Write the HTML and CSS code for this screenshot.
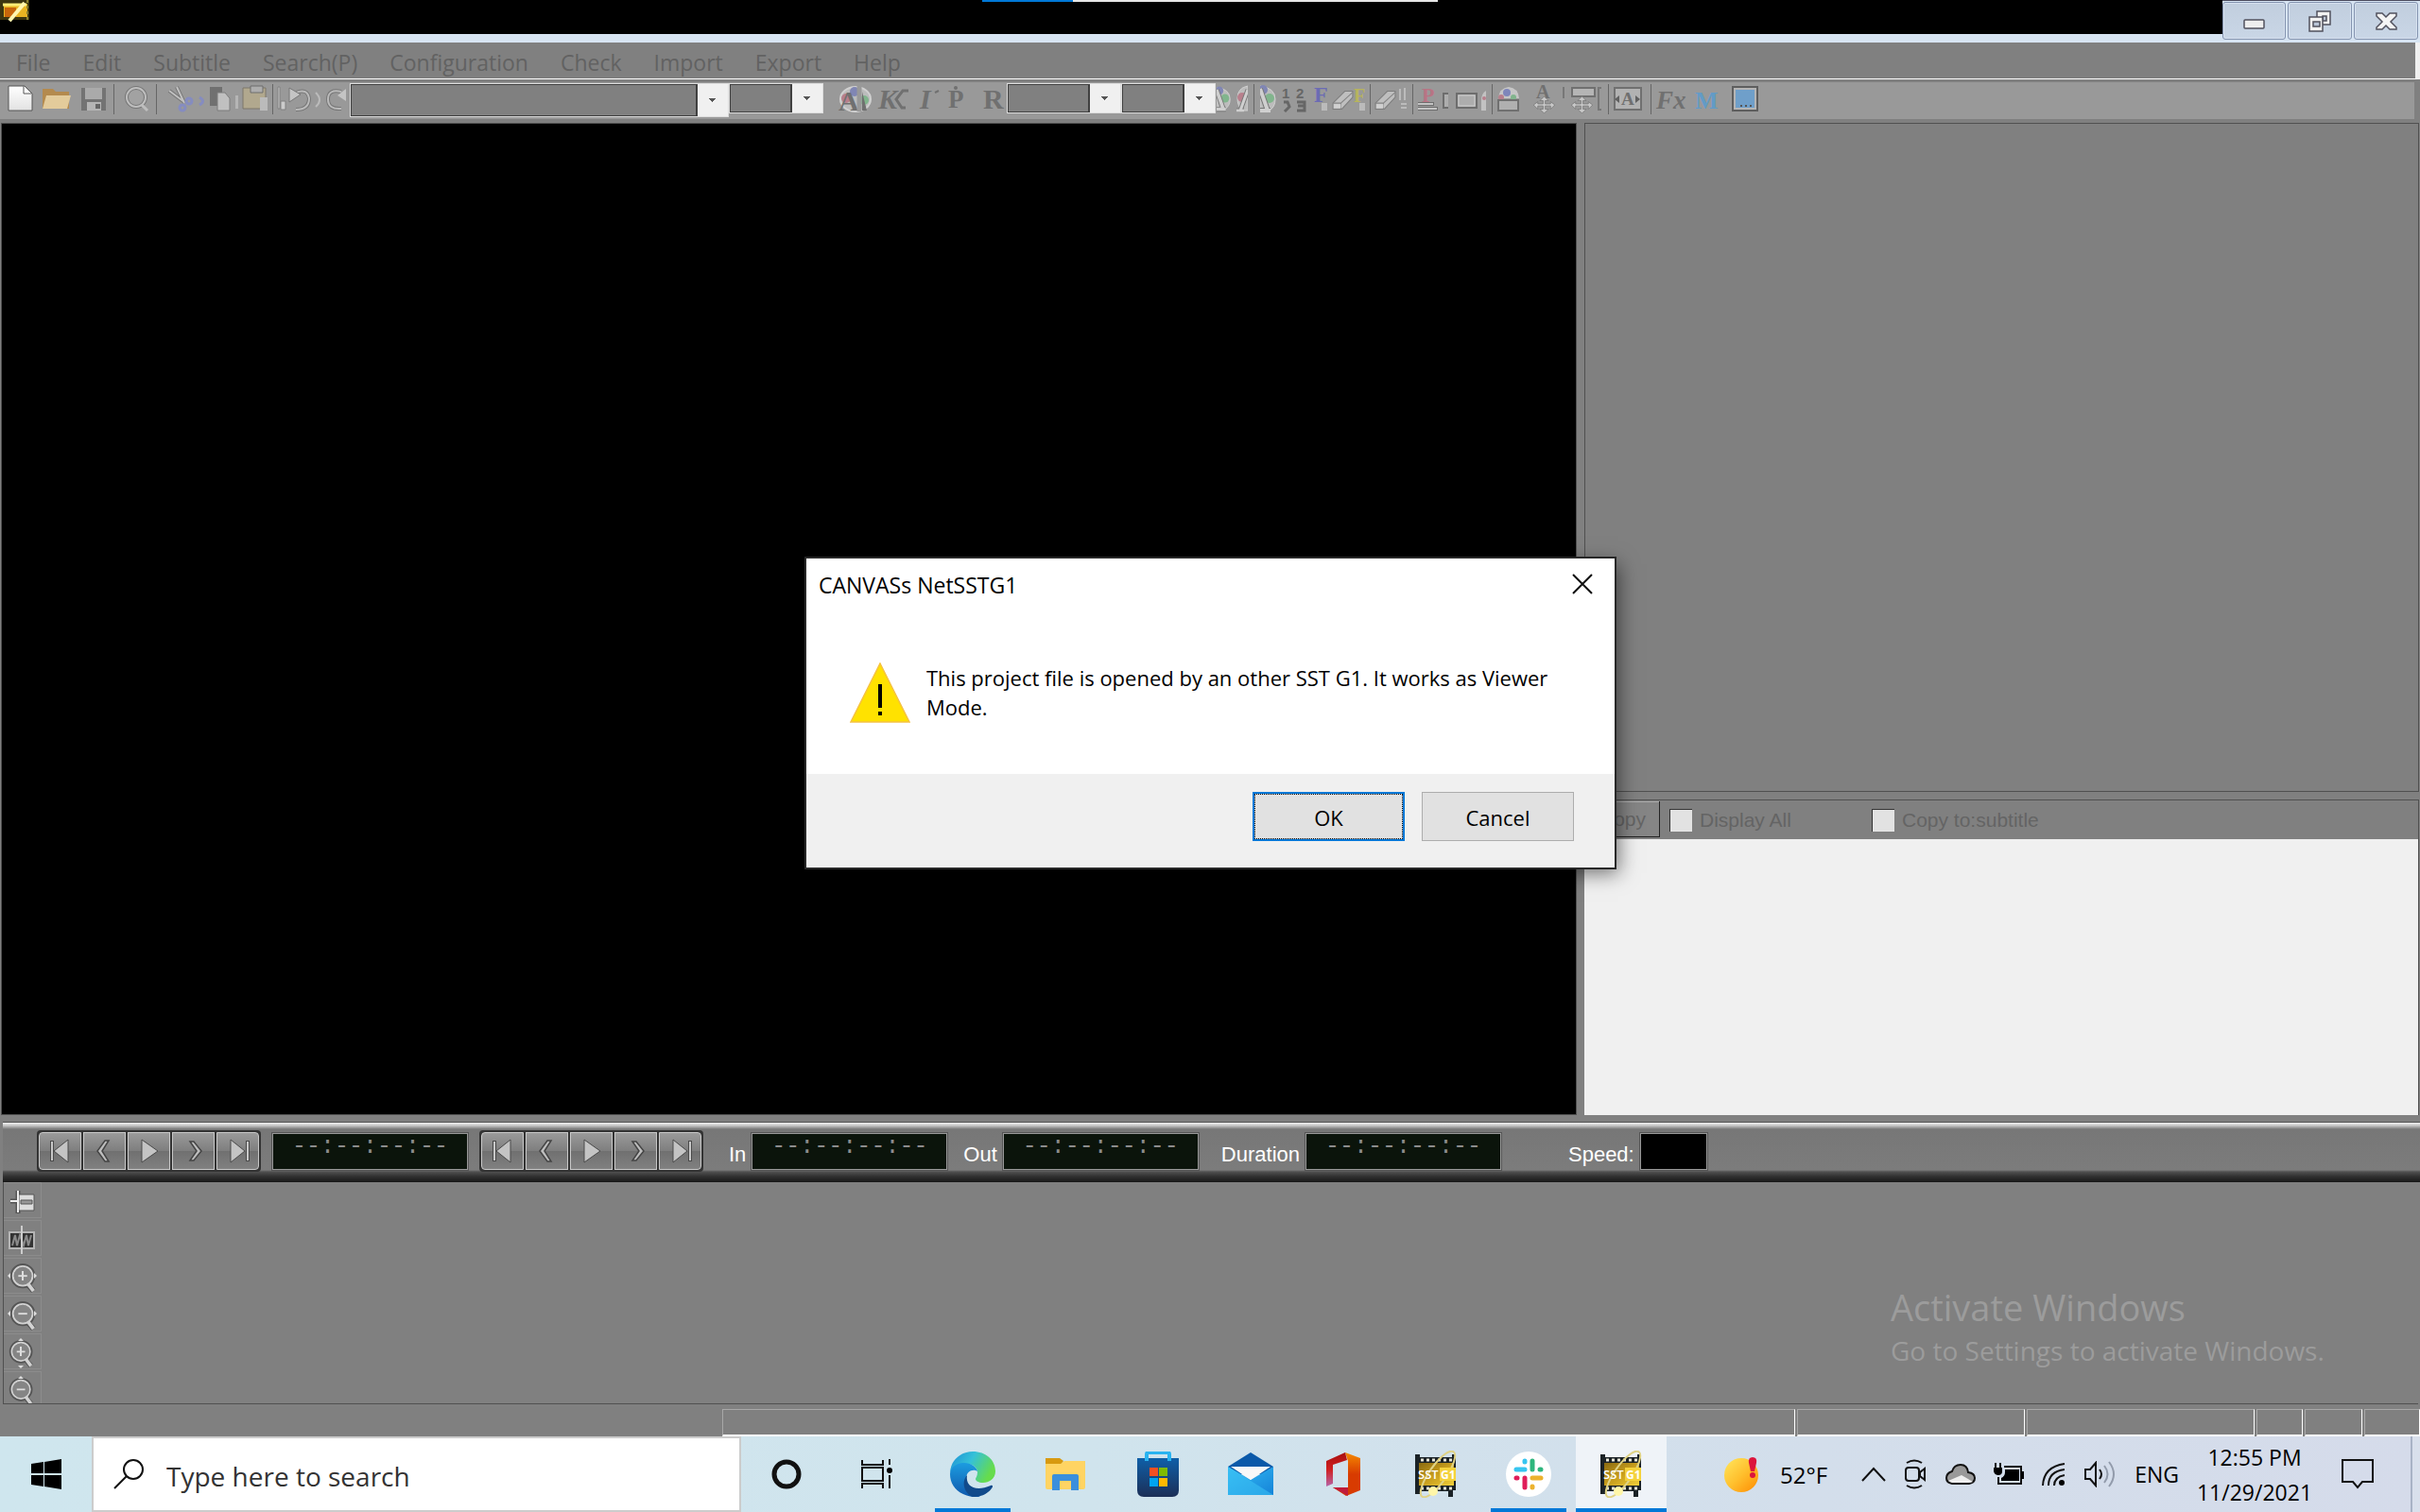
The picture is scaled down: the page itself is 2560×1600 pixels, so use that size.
FILE: index.html
```html
<!DOCTYPE html>
<html lang="en">
<head>
<meta charset="utf-8">
<title>CANVASs NetSSTG1</title>
<link rel="stylesheet" href="styles.css">
</head>
<body>
<svg class="defs" width="0" height="0" aria-hidden="true">
  <defs>
    <linearGradient id="page" x1="0" y1="0" x2="0" y2="1"><stop offset="0" stop-color="#fff"/><stop offset="1" stop-color="#e2e2e2"/></linearGradient>
    <linearGradient id="edgeTop" x1="0" y1="0" x2="1" y2="0.4"><stop offset="0" stop-color="#1b8ed6"/><stop offset=".5" stop-color="#35c1d8"/><stop offset="1" stop-color="#66dc4c"/></linearGradient>
    <linearGradient id="edgeSwirl" x1="0" y1="0" x2="0" y2="1"><stop offset="0" stop-color="#1c9ce0"/><stop offset="1" stop-color="#0f58ac"/></linearGradient>
    <linearGradient id="store" x1="0" y1="0" x2="0" y2="1"><stop offset="0" stop-color="#0f5fa8"/><stop offset="1" stop-color="#1c2f57"/></linearGradient>
    <linearGradient id="office" x1="0" y1="0" x2="0" y2="1"><stop offset="0" stop-color="#f58a00"/><stop offset=".5" stop-color="#d83b01"/><stop offset="1" stop-color="#d83b01"/></linearGradient>
    <linearGradient id="officeSide" x1="0" y1="0" x2="0" y2="1"><stop offset="0" stop-color="#a80f0f"/><stop offset=".5" stop-color="#d02020"/><stop offset="1" stop-color="#b665a8"/></linearGradient>
    <linearGradient id="mail" x1="0" y1="0" x2="1" y2="1"><stop offset="0" stop-color="#35bdf5"/><stop offset="1" stop-color="#1583d8"/></linearGradient>
    <linearGradient id="gold" x1="0" y1="0" x2="1" y2="1"><stop offset="0" stop-color="#8a6a10"/><stop offset=".5" stop-color="#c79d1d"/><stop offset="1" stop-color="#f0cf3a"/></linearGradient>
    <linearGradient id="sun" x1="0" y1="0" x2="1" y2="1"><stop offset="0" stop-color="#ffe75e"/><stop offset=".5" stop-color="#ffc02e"/><stop offset="1" stop-color="#ff8a00"/></linearGradient>
    <symbol id="first" viewBox="0 0 26 26"><path d="M4 2v22" stroke="#4a4a4a" stroke-width="4"/><path d="M4 3v20" stroke="#c8c8c8" stroke-width="2"/><path d="M21 1v24L6 13z" fill="#c4c4c4" stroke="#4a4a4a"/></symbol>
    <symbol id="prev" viewBox="0 0 26 26"><path d="M17 2h-4L5 13l8 11h4l-7-11z" fill="#bdbdbd" stroke="#444" stroke-width="1.5"/></symbol>
    <symbol id="play" viewBox="0 0 26 26"><path d="M5 1v24L22 13z" fill="#c4c4c4" stroke="#4a4a4a"/></symbol>
    <symbol id="next" viewBox="0 0 26 26"><path d="M9 3h4l8 10-8 10H9l7-10z" fill="#bdbdbd" stroke="#444" stroke-width="1.5"/></symbol>
    <symbol id="last" viewBox="0 0 26 26"><path d="M5 1v24l15-12z" fill="#c4c4c4" stroke="#4a4a4a"/><path d="M23 2v22" stroke="#4a4a4a" stroke-width="4"/><path d="M23 3v20" stroke="#c8c8c8" stroke-width="2"/></symbol>
    <symbol id="palette" viewBox="0 0 36 28"><ellipse cx="18" cy="14" rx="16" ry="13" fill="#bcbcbc" stroke="#d0d0d0" stroke-width="2"/><circle cx="8" cy="13" r="5" fill="#b87f8c"/><circle cx="17" cy="6" r="5" fill="#8086b4"/><circle cx="27" cy="15" r="5" fill="#81b58d"/></symbol>
    <symbol id="right-half" viewBox="0 0 18 30"><path d="M0 2q16 2 16 14 0 8-6 12H0z" fill="#bcbcbc" stroke="#d0d0d0"/><circle cx="3" cy="6" r="5" fill="#8086b4"/><circle cx="10" cy="15" r="5" fill="#81b58d"/><path d="M0 5l8 23M0 28h11" stroke="#777" stroke-width="6"/><path d="M0 5l8 23M0 28h11" stroke="#cfcfcf" stroke-width="4"/></symbol>
    <symbol id="left-half" viewBox="0 0 12 30"><path d="M12 2Q1 4 1 15q0 8 5 13h6z" fill="#bcbcbc" stroke="#d0d0d0"/><circle cx="6" cy="14" r="5" fill="#b87f8c"/><path d="M12 6L4 28M0 28h8" stroke="#777" stroke-width="5"/><path d="M12 6L4 28M0 28h8" stroke="#cfcfcf" stroke-width="3"/></symbol>
    <symbol id="move" viewBox="0 0 20 16"><path d="M10 0l4 4h-3v3h5V5l4 3-4 4V9h-5v3h3l-4 4-4-4h3V9H4v3L0 8l4-3v2h5V4H6z" fill="#c8c8c8" stroke="#777" stroke-width=".7"/></symbol>
    <symbol id="eraser" viewBox="0 0 22 22"><path d="M1 14L13 2h8v6L10 20H1z" fill="#bfbfbf" stroke="#7d7d7d"/><path d="M1 14h8L21 3M9 14v6" fill="none" stroke="#858585"/><path d="M2 15h7v4H2z" fill="#d0d0d0"/></symbol>
    <symbol id="lens" viewBox="0 0 34 34"><path d="M21 23l7 8" stroke="#555" stroke-width="6"/><circle cx="16" cy="14" r="12" fill="#858585" stroke="#555" stroke-width="4"/><circle cx="16" cy="14" r="11" fill="none" stroke="#d2d2d2" stroke-width="2"/><path d="M22 23l6 8" stroke="#d2d2d2" stroke-width="4"/><path d="M11 14h10" stroke="#ddd" stroke-width="2"/></symbol>
    <symbol id="sst" viewBox="0 0 50 50">
      <path d="M3 4h5v3h34V4h4v38h-3v7h-5v-6H8v3H3z" fill="#1b2226"/>
      <path d="M7 13h37v24H7z" fill="url(#gold)"/>
      <path d="M9 10h34M9 40h34" stroke="#e8e6d8" stroke-width="3" stroke-dasharray="3 3"/>
      <ellipse cx="27" cy="25" rx="9" ry="29" transform="rotate(35 27 25)" fill="none" stroke="#e0d385" stroke-width="2"/>
      <path d="M29 18h17v14H29z" fill="#f4d23c"/>
      <circle cx="22" cy="43" r="5" fill="#fff6a8"/>
      <text x="6" y="30" font-size="13" font-family="Open Sans, sans-serif" font-weight="600" fill="#fff">SST</text>
      <text x="30" y="30" font-size="12" font-family="Open Sans, sans-serif" font-weight="700" fill="#fff">G1</text>
    </symbol>
  </defs>
</svg>

<div class="app">
  <header class="titlebar">
    <svg class="app-icon" width="32" height="36" viewBox="0 0 32 36"><path d="M0 0h31v21H0z" fill="#3b3510"/><path d="M4 4h25v14H4z" fill="#e8b422"/><path d="M5 8h12v10H5z" fill="#c7660b"/><path d="M3 5h25" stroke="#ffef77" stroke-width="3"/><path d="M26 3L10 22" stroke="#fff6b0" stroke-width="4"/><path d="M29 0v24" stroke="#8a8030" stroke-width="2" stroke-dasharray="3 3"/></svg>
    <div class="load"><span class="load-done"></span><span class="load-rest"></span></div>
    <div class="window-buttons">
      <button aria-label="Minimize"><svg width="30" height="24" viewBox="0 0 30 24"><rect x="4" y="11" width="21" height="9" rx="1" fill="#eee" stroke="#52525e" stroke-width="1.5"/></svg></button>
      <button aria-label="Restore"><svg width="30" height="24" viewBox="0 0 30 24"><path d="M12 2h14v14H12z" fill="#f2f2f2" stroke="#52525e" stroke-width="1.5"/><path d="M18 7h4v5h-4z" fill="#b8c4d6" stroke="#52525e" stroke-width="1.5"/><path d="M4 8h14v15H4z" fill="#f2f2f2" stroke="#52525e" stroke-width="1.5"/><path d="M8 13h7v5H8z" fill="#b8c4d6" stroke="#52525e" stroke-width="1.5"/></svg></button>
      <button aria-label="Close window"><svg width="30" height="24" viewBox="0 0 30 24"><path d="M5 4h6l4 4 4-4h7v3l-6 6 6 6v2h-7l-4-4-4 4H5v-2l6-6-6-6z" fill="#f4f4f4" stroke="#52525e" stroke-width="1.5"/></svg></button>
    </div>
  </header>

  <nav class="menubar">
    <button>File</button><button>Edit</button><button>Subtitle</button><button>Search(P)</button><button>Configuration</button><button>Check</button><button>Import</button><button>Export</button><button>Help</button>
  </nav>

  <div class="toolbar">
    <button aria-label="New"><svg width="39" height="39" viewBox="0 0 39 39"><path d="M9 4h17l8 8v18H9z" fill="url(#page)" stroke="#555"/><path d="M25 4v8h8" fill="#fff" stroke="#555"/></svg></button>
    <button aria-label="Open"><svg width="42" height="39" viewBox="39 0 42 39"><path d="M45 7h11l3 3h14v18H45z" fill="#b48a4e"/><path d="M49 14h26l-4 14H45z" fill="#e3cb9b"/></svg></button>
    <button aria-label="Save"><svg width="39" height="39" viewBox="81 0 39 39"><path d="M86 6h26v24H86z" fill="#737373"/><path d="M90 6h18v12H90z" fill="#aaa"/><path d="M92 21h15v9H92z" fill="#b5b5b5"/><path d="M101 23h5v5h-5z" fill="#666"/></svg></button>
    <span class="sep"></span>
    <button aria-label="Find"><svg width="44" height="39" viewBox="121 0 44 39"><ellipse cx="144" cy="16" rx="10" ry="10" fill="#a2a2a2" stroke="#777" stroke-width="4"/><circle cx="144" cy="16" r="10" fill="none" stroke="#bebebe" stroke-width="2"/><path d="M150 24l6 6" stroke="#bebebe" stroke-width="3"/></svg></button>
    <span class="sep"></span>
    <button aria-label="Cut"><svg width="54" height="39" viewBox="166 0 54 39"><path d="M179 9l16 12M187 5l8 17" stroke="#747474" stroke-width="4"/><path d="M179 9l16 12M187 5l8 17" stroke="#c0c0c0" stroke-width="2"/><circle cx="193" cy="27" r="3" fill="none" stroke="#858cc0" stroke-width="3"/><circle cx="200" cy="20" r="3" fill="none" stroke="#858cc0" stroke-width="3"/><path d="M211 16q7 4 0 8" fill="none" stroke="#858cc0" stroke-width="3"/></svg></button>
    <button aria-label="Copy"><svg width="35" height="39" viewBox="220 0 35 39"><path d="M222 5h13v20h-13z" fill="#707070"/><path d="M230 11h8l5 6v13h-13z" fill="#c0c0c0" stroke="#7c7c7c"/><path d="M249 14h3v14h-3z" fill="#b5b5b5"/></svg></button>
    <button aria-label="Paste"><svg width="33" height="39" viewBox="255 0 33 39"><path d="M257 6h24v22h-24z" fill="#b1a88e" stroke="#7d776a"/><path d="M265 4h13v7h-13z" fill="#adadad" stroke="#6d6d6d"/><path d="M275 16h8v14h-8z" fill="#bbb"/></svg></button>
    <span class="sep"></span>
    <button aria-label="Undo"><svg width="43" height="39" viewBox="289 0 43 39"><path d="M294 5h2v23h-2zM297 20h5v9h-5z" fill="#ccc" stroke="#808080"/><path d="M313 11q12-5 14 6q0 12-14 12" fill="none" stroke="#777" stroke-width="4"/><path d="M313 11q12-5 14 6q0 12-14 12" fill="none" stroke="#bbb" stroke-width="2"/><path d="M306 6l12 7-12 8z" fill="#c4c4c4" stroke="#777"/></svg></button>
    <button aria-label="Redo"><svg width="38" height="39" viewBox="332 0 38 39"><path d="M334 11q8 8 0 15" fill="none" stroke="#bbb" stroke-width="2"/><path d="M361 10q-14-3-14 8q0 11 14 10" fill="none" stroke="#777" stroke-width="4"/><path d="M361 10q-14-3-14 8q0 11 14 10" fill="none" stroke="#bbb" stroke-width="2"/><path d="M366 7v13l-9-6z" fill="#c4c4c4"/></svg></button>
    <select class="combo wide" aria-label="Style"><option></option></select>
    <select class="combo size" aria-label="Size"><option></option></select>
    <button aria-label="Text colour"><svg width="56" height="39" viewBox="871 0 56 39"><use href="#palette" x="887" y="4" width="36" height="28"/><text class="glyph" x="887" y="30" font-size="30">A</text><path d="M909 4v27" stroke="#999" stroke-width="5"/><path d="M912 10v20h5z" fill="#707070"/></svg></button>
    <button aria-label="Kerning"><svg width="40" height="39" viewBox="927 0 40 39"><text class="glyph" x="929" y="28" font-size="30" font-style="italic">K</text><path d="M961 9h-6l-7 9 6 9h4" fill="none" stroke="#707070" stroke-width="3"/></svg></button>
    <button aria-label="Italic"><svg width="32" height="39" viewBox="967 0 32 39"><text class="glyph" x="973" y="28" font-size="30" font-style="italic">I</text><path d="M989 11l4-2" stroke="#707070" stroke-width="2"/></svg></button>
    <button aria-label="Emphasis dot"><svg width="34" height="39" viewBox="999 0 34 39"><text class="glyph" x="1003" y="27" font-size="27">P</text><circle cx="1011" cy="6" r="2" fill="#707070"/></svg></button>
    <button aria-label="Ruby"><svg width="32" height="39" viewBox="1033 0 32 39"><text class="glyph" x="1040" y="28" font-size="30">R</text></svg></button>
    <select class="combo font" aria-label="Ruby font"><option></option></select>
    <select class="combo size" aria-label="Ruby size"><option></option></select>
    <button aria-label="Fill colour"><svg width="18" height="39" viewBox="1286 0 18 39"><use href="#right-half" x="1287" y="2" width="16" height="30"/></svg></button>
    <button aria-label="Edge colour"><svg width="22" height="39" viewBox="1304 0 22 39"><use href="#left-half" x="1308" y="2" width="12" height="30"/></svg></button>
    <span class="sep"></span>
    <button aria-label="Shadow colour"><svg width="27" height="39" viewBox="1327 0 27 39"><use href="#right-half" x="1333" y="2" width="18" height="30"/></svg></button>
    <button aria-label="Renumber"><svg width="32" height="39" viewBox="1354 0 32 39"><g class="digits" font-size="15"><text x="1356" y="17">1</text><text x="1371" y="17">2</text></g><path d="M1358 21h4l2 5-5 5M1372 21h8v9h-8M1373 25h7" fill="none" stroke="#666" stroke-width="3"/></svg></button>
    <button aria-label="Font tag"><svg width="21" height="39" viewBox="1386 0 21 39"><path d="M1398 22h6v8h-6z" fill="#bbb"/><text class="glyph blue" x="1390" y="21" font-size="24">F</text></svg></button>
    <button aria-label="Clear font"><svg width="42" height="39" viewBox="1407 0 42 39"><use href="#eraser" x="1409" y="7" width="23" height="24"/><path d="M1438 22h6v8h-6z" fill="#bbb"/><text class="glyph yellow" x="1432" y="21" font-size="20">F</text></svg></button>
    <span class="sep"></span>
    <button aria-label="Clear"><svg width="44" height="39" viewBox="1450 0 44 39"><use href="#eraser" x="1454" y="7" width="23" height="24"/><path d="M1481 7v12M1486 6v13M1482 23h6M1482 27h6" stroke="#bbb" stroke-width="2"/></svg></button>
    <span class="sep"></span>
    <button aria-label="Position"><svg width="29" height="39" viewBox="1495 0 29 39"><text class="glyph rose" x="1504" y="21" font-size="22">P</text><path d="M1500 23h17M1500 28h21" stroke="#6e6e6e" stroke-width="4"/><path d="M1500 23h16M1500 28h20" stroke="#c4c4c4" stroke-width="2"/></svg></button>
    <button aria-label="Box"><svg width="54" height="39" viewBox="1524 0 54 39"><path d="M1532 12h-5v15h5M1541 12h21v15h-21z" fill="#adadad" stroke="#6d6d6d" stroke-width="2"/><path d="M1543 14h17v11h-17z" fill="none" stroke="#ccc"/><path d="M1572 9q-5 3-5 10v11h5z" fill="#c2c2c2"/><circle cx="1570" cy="17" r="2" fill="#b87f8c"/></svg></button>
    <span class="sep"></span>
    <button aria-label="Box colour"><svg width="41" height="39" viewBox="1579 0 41 39"><path d="M1585 17q1-11 11-12 10 1 11 12z" fill="#c6c6c6"/><circle cx="1594" cy="11" r="4" fill="#7f86ba"/><circle cx="1588" cy="16" r="3" fill="#b87f8c"/><circle cx="1601" cy="16" r="3" fill="#81b58d"/><path d="M1585 19h21v11h-21z" fill="#b0b0b0" stroke="#707070" stroke-width="2"/></svg></button>
    <button aria-label="Move text"><svg width="37" height="39" viewBox="1620 0 37 39"><text class="glyph" x="1625" y="17" font-size="20">A</text><use href="#move" x="1622" y="15" width="23" height="18"/><path d="M1654 5v12" stroke="#777" stroke-width="2"/></svg></button>
    <button aria-label="Move box"><svg width="44" height="39" viewBox="1657 0 44 39"><path d="M1663 6h24v9h-24z" fill="#b5b5b5" stroke="#707070" stroke-width="2"/><use href="#move" x="1662" y="15" width="23" height="18"/><path d="M1694 6h-3v23h3" fill="none" stroke="#777" stroke-width="2"/></svg></button>
    <span class="sep"></span>
    <button aria-label="Spacing"><svg width="44" height="39" viewBox="1702 0 44 39"><path d="M1708 6h28v23h-28z" fill="#b2b2b2" stroke="#707070" stroke-width="2"/><text class="glyph" x="1715" y="24" font-size="19">A</text><path d="M1708 18l5-4v8zM1735 18l-5-4v8z" fill="#606060"/></svg></button>
    <span class="sep"></span>
    <button aria-label="Effects"><svg width="40" height="39" viewBox="1747 0 40 39"><text class="glyph" x="1752" y="28" font-size="27" font-style="italic">Fx</text></svg></button>
    <button aria-label="Marker"><svg width="38" height="39" viewBox="1787 0 38 39"><text class="glyph sky" x="1793" y="28" font-size="26">M</text></svg></button>
    <button aria-label="Preview"><svg width="40" height="39" viewBox="1825 0 40 39"><path d="M1833 5h26v25h-26z" fill="#b5b5b5" stroke="#5e5e5e" stroke-width="2"/><path d="M1836 8h20v19h-20z" fill="#6f9fca"/><path d="M1841 25h13" stroke="#555" stroke-width="2" stroke-dasharray="2 3"/></svg></button>
  </div>

  <main class="workspace">
    <section class="video" aria-label="Video"></section>
    <aside class="side">
      <section class="list" aria-label="Subtitles"></section>
      <div class="copybar">
        <button class="copy">Copy</button>
        <label><input type="checkbox">Display All</label>
        <label><input type="checkbox">Copy to:subtitle</label>
      </div>
      <textarea class="memo" aria-label="Memo"></textarea>
    </aside>
  </main>

  <section class="transport">
    <div class="keys">
      <button aria-label="First"><svg width="26" height="26"><use href="#first"/></svg></button><button aria-label="Back"><svg width="26" height="26"><use href="#prev"/></svg></button><button aria-label="Play"><svg width="26" height="26"><use href="#play"/></svg></button><button aria-label="Forward"><svg width="26" height="26"><use href="#next"/></svg></button><button aria-label="Last"><svg width="26" height="26"><use href="#last"/></svg></button>
    </div>
    <output class="code">--:--:--:--</output>
    <div class="keys">
      <button aria-label="First cue"><svg width="26" height="26"><use href="#first"/></svg></button><button aria-label="Previous cue"><svg width="26" height="26"><use href="#prev"/></svg></button><button aria-label="Play cue"><svg width="26" height="26"><use href="#play"/></svg></button><button aria-label="Next cue"><svg width="26" height="26"><use href="#next"/></svg></button><button aria-label="Last cue"><svg width="26" height="26"><use href="#last"/></svg></button>
    </div>
    <div class="field in"><span>In</span><output class="code">--:--:--:--</output></div>
    <div class="field out"><span>Out</span><output class="code">--:--:--:--</output></div>
    <div class="field duration"><span>Duration</span><output class="code">--:--:--:--</output></div>
    <div class="field speed"><span>Speed:</span><output class="code"></output></div>
  </section>

  <section class="timeline">
    <div class="timeline-tools">
      <button aria-label="Timeline mode"><svg width="34" height="34" viewBox="0 0 34 34"><path d="M15 4v24M7 15h8" stroke="#555" stroke-width="5"/><path d="M16 8h16v17H16z" fill="#ddd" stroke="#555"/><path d="M18 14h12v4H18z" fill="#999" stroke="#555"/><path d="M15 4v23M7 15h8" stroke="#eee" stroke-width="2"/></svg></button>
      <button aria-label="Waveform"><svg width="34" height="34" viewBox="0 0 34 34"><path d="M6 8h26v17H6z" fill="#333" stroke="#b5b5b5" stroke-width="2"/><path d="M9 22l3-11 2 11 3-11 4 11 3-11 2 11 3-11" fill="none" stroke="#8a8a8a" stroke-width="2"/><path d="M19 1v30" stroke="#ccc" stroke-width="2"/></svg></button>
      <button aria-label="Widen"><svg width="36" height="34" viewBox="0 0 36 34"><use href="#lens" x="5" y="1" width="32" height="32"/><path d="M20 9v10" stroke="#ddd" stroke-width="2"/><path d="M7 11l-3 3 3 3M32 11l3 3-3 3" fill="#ddd"/></svg></button>
      <button aria-label="Narrow"><svg width="36" height="34" viewBox="0 0 36 34"><use href="#lens" x="5" y="1" width="32" height="32"/><path d="M7 11l-3 3 3 3M32 11l3 3-3 3" fill="#ddd"/></svg></button>
      <button aria-label="Taller"><svg width="36" height="34" viewBox="0 0 36 34"><use href="#lens" x="3" y="2" width="32" height="30"/><path d="M18 9v10" stroke="#ddd" stroke-width="2"/><path d="M15 3l3-3 3 3M15 29l3 3 3-3" fill="#ddd"/></svg></button>
      <button aria-label="Shorter"><svg width="36" height="34" viewBox="0 0 36 34"><use href="#lens" x="3" y="2" width="32" height="30"/><path d="M15 3l3-3 3 3M15 29l3 3 3-3" fill="#ddd"/></svg></button>
    </div>
    <div class="watermark"><p class="wm-title">Activate Windows</p><p class="wm-text">Go to Settings to activate Windows.</p></div>
  </section>

  <footer class="status"><span></span><span></span><span></span><span></span><span></span><span></span></footer>
</div>

<div class="taskbar">
  <button class="start" aria-label="Start"><svg width="32" height="32" viewBox="0 0 32 32"><path d="M0 5l13-2v12H0zM14 3l18-3v15H14zM0 17h13v12L0 27zM14 17h18v15l-18-3z"/></svg></button>
  <label class="search"><svg width="32" height="32" viewBox="0 0 32 32"><circle cx="21" cy="11" r="10" fill="none" stroke="#111" stroke-width="2"/><path d="M14 18L1 31" stroke="#111" stroke-width="2"/></svg><input type="text" placeholder="Type here to search" aria-label="Search"></label>
  <button class="tool" aria-label="Cortana"><svg width="34" height="34" viewBox="0 0 34 34"><circle cx="17" cy="17" r="13" fill="none" stroke="#111" stroke-width="5"/></svg></button>
  <button class="tool" aria-label="Task view"><svg width="34" height="32" viewBox="0 0 34 32"><path d="M1 1v5h22V1M1 31v-5h22v5M1 9h22v14H1zM30 0v6M30 17v14" fill="none" stroke="#111" stroke-width="2"/><circle cx="30" cy="12" r="3"/></svg></button>
  <div class="apps">
    <button class="open" aria-label="Edge"><svg width="48" height="48" viewBox="0 0 48 48"><path d="M0 22C1 8 12 0 24 0c14 0 24 9 24 21 0 8-7 12-13 12-5 0-8-2-8-4 0-1 2-3 2-7 0-5-5-9-11-9C10 13 3 16 0 22z" fill="url(#edgeTop)"/><path d="M0 24c0-7 7-12 15-12 7 0 13 4 14 9-4-3-12-1-12 8 0 8 6 15 15 19-18 2-32-9-32-24z" fill="url(#edgeSwirl)"/><path d="M18 25c-2 12 9 18 25 11 2-1 3 1 1 3-5 7-13 9-20 9-8-3-13-15-6-23z" fill="#114a8b"/></svg></button>
    <button aria-label="File Explorer"><svg width="44" height="36" viewBox="0 0 44 36"><path d="M1 1h15l4 3-3 4H1z" fill="#d89a10"/><path d="M1 7h16l4-3h22v28q0 2-2 2H3q-2 0-2-2z" fill="#ffd463"/><path d="M8 35V20q0-2 2-2h24q2 0 2 2v15h-8V25H16v10z" fill="#3a8fdc"/></svg></button>
    <button aria-label="Store"><svg width="48" height="48" viewBox="0 0 48 48"><path d="M2 7h44v34q0 7-7 7H9q-7 0-7-7z" fill="url(#store)"/><path d="M12 10V3q0-2 2-2h20q2 0 2 2v7" fill="none" stroke="#2ab3f0" stroke-width="4"/><path d="M15 17h9v9h-9z" fill="#f25022"/><path d="M25 17h9v9h-9z" fill="#7fba00"/><path d="M15 28h9v9h-9z" fill="#00a4ef"/><path d="M25 28h9v9h-9z" fill="#ffb900"/></svg></button>
    <button aria-label="Mail"><svg width="50" height="46" viewBox="0 0 50 46"><path d="M1 15L25 0l24 15v8H1z" fill="#0b59a9"/><path d="M1 15l24 14 24-14v30H1z" fill="url(#mail)"/><path d="M1 15v30h48z" fill="#3bc0f4" opacity=".6"/><path d="M4 15h42L25 29z" fill="#f8f8f8"/></svg></button>
    <button aria-label="Office"><svg width="38" height="48" viewBox="0 0 38 48"><path d="M21 1l16 6v34l-15 6-14-9h16V10z" fill="url(#office)"/><path d="M21 1L1 10v27l7-3V14l15-5z" fill="url(#officeSide)"/><path d="M8 38h16v9z" fill="#c01c3a"/></svg></button>
    <button aria-label="SST G1"><svg width="50" height="50"><use href="#sst"/></svg></button>
    <button class="open" aria-label="Slack"><svg width="48" height="48" viewBox="0 0 48 48"><circle cx="24" cy="24" r="24" fill="#fff"/><g stroke-width="5" stroke-linecap="round"><path d="M20 10v1M11 19h9" stroke="#36c5f0"/><path d="M28 10v9M36 19h1" stroke="#2eb67d"/><path d="M28 28h9M28 37v1" stroke="#ecb22e"/><path d="M20 28v10M11 28h1" stroke="#e01e5a"/></g></svg></button>
    <button class="open active" aria-label="SST G1 window"><svg width="50" height="50"><use href="#sst"/></svg></button>
  </div>
  <div class="tray">
    <button class="weather"><svg width="40" height="40" viewBox="0 0 40 40"><circle cx="19" cy="21" r="18" fill="url(#sun)"/><path d="M31 2q5 0 4 6l-2 9h-4l-2-9q-1-6 4-6z" fill="#dc143c"/><circle cx="31" cy="21" r="3" fill="#dc143c"/></svg>52°F</button>
    <div class="tray-icons">
      <svg width="26" height="16" viewBox="0 0 26 16"><path d="M1 15L13 2l12 13" fill="none" stroke="#111" stroke-width="2"/></svg>
      <svg width="28" height="32" viewBox="0 0 28 32"><rect x="4" y="9" width="14" height="14" rx="3" fill="none" stroke="#111" stroke-width="2"/><path d="M19 14l5-4v12l-5-4zM5 4q8-5 16 0M5 28q8 5 16 0" fill="none" stroke="#111" stroke-width="2"/></svg>
      <svg width="34" height="24" viewBox="0 0 34 24"><path d="M8 22q-6-1-6-6t6-7q2-7 9-7t8 8q7 1 7 6t-6 6z" fill="#999" stroke="#111" stroke-width="2"/><path d="M4 19l14-6 12 7q-2 1-5 1H8z" fill="#eee"/></svg>
      <svg width="34" height="24" viewBox="0 0 34 24"><path d="M12 4h18v18H6v-7" fill="none" stroke="#111" stroke-width="2"/><path d="M13 7h15v12H9v-3q4-2 4-6zM30 9h3v8h-3zM1 5h9v4q0 4-4 4t-5-4z"/><path d="M3 0v6M8 0v6" stroke="#111" stroke-width="2"/></svg>
      <svg width="28" height="26" viewBox="0 0 28 26"><path d="M2 25Q3 5 25 2M8 25Q8 10 25 8M14 25q0-9 11-11" fill="none" stroke="#111" stroke-width="2"/><circle cx="22" cy="22" r="3"/></svg>
      <svg width="34" height="28" viewBox="0 0 34 28"><path d="M2 9h5l6-7v24l-6-7H2z" fill="none" stroke="#111" stroke-width="2"/><path d="M17 9q4 5 0 10" fill="none" stroke="#111" stroke-width="2"/><path d="M22 5q7 9 0 18M27 1q10 13 0 26" fill="none" stroke="#929bab" stroke-width="2"/></svg>
    </div>
    <button class="lang">ENG</button>
    <button class="clock"><span>12:55 PM</span><span>11/29/2021</span></button>
    <button class="notify" aria-label="Notifications"><svg width="34" height="34" viewBox="0 0 34 34"><path d="M1 2h32v23H22l-5 6-5-6H1z" fill="none" stroke="#111" stroke-width="2"/></svg></button>
  </div>
</div>

<div class="dialog" role="dialog" aria-labelledby="dialog-title">
  <div class="dialog-head"><h1 id="dialog-title">CANVASs NetSSTG1</h1><button class="close" aria-label="Close"><svg width="22" height="22" viewBox="0 0 22 22"><path d="M1 1l20 20M21 1L1 21" stroke="#111" stroke-width="2"/></svg></button></div>
  <div class="dialog-body">
    <svg width="64" height="64" viewBox="0 0 64 64"><path d="M32 1l31 62H1z" fill="#ffe200" stroke="#f5c242" stroke-width="1.5"/><path d="M30 23h4v25h-4zM30 52h4v4h-4z"/></svg>
    <p>This project file is opened by an other SST G1. It works as Viewer Mode.</p>
  </div>
  <div class="dialog-foot"><button class="ok">OK</button><button>Cancel</button></div>
</div>
</body>
</html>
```
FILE: styles.css
```css
* { box-sizing: border-box; }

body {
  margin: 0;
  min-height: 100vh;
  display: flex;
  flex-direction: column;
  background: #808080;
  font-family: "Open Sans", "Noto Sans", sans-serif;
  color: #000;
}

button {
  margin: 0;
  padding: 0;
  border: 0;
  background: none;
  font: inherit;
  color: inherit;
}

svg { display: block; flex: none; }
.defs { position: absolute; }

.app { flex: 1; display: flex; flex-direction: column; }

/* Title bar */
.titlebar {
  position: relative;
  height: 45px;
  display: flex;
  justify-content: space-between;
  background: linear-gradient(#000 0 36px, #d7e4f2 36px);
}
.load { position: absolute; left: 1039px; top: 0; display: flex; height: 2px; }
.load-done { width: 96px; background: #0078d7; }
.load-rest { width: 386px; background: #e6e6e6; }
.window-buttons {
  display: flex;
  gap: 2px;
  padding: 1px 2px 3px 0;
  background: #d7e4f2;
  border-top: 1px solid #4a4a5c;
}
.window-buttons button {
  width: 68px;
  display: grid;
  place-items: center;
  border: 1px solid #8494b0;
  border-radius: 3px;
  background: linear-gradient(#c1cede, #c9d6e6);
  box-shadow: inset 0 0 0 1px #d6e0ee;
}
.window-buttons button:first-child { width: 67px; }

/* Menu */
.menubar {
  height: 39px;
  padding: 3px 0 0 17px;
  display: flex;
  gap: 34px;
  align-items: center;
  border-right: 5px solid #f0f0f0;
  border-bottom: 1px solid #fff;
  color: #626262;
  font-size: 23px;
  line-height: 30px;
}

/* Toolbar */
.toolbar {
  height: 39px;
  margin: 3px 6px 4px 0;
  display: flex;
  background: #999;
}
.sep { width: 1px; height: 32px; margin-top: 2px; background: #666; }
.combo {
  appearance: none;
  height: 32px;
  margin-top: 1px;
  border: 1px solid #ddd;
  border-radius: 0;
  background-color: #808080;
  background-image:
    linear-gradient(45deg, transparent 50%, #555 50%),
    linear-gradient(-45deg, transparent 50%, #555 50%),
    linear-gradient(#f0f0f0, #f0f0f0),
    linear-gradient(#404040, #404040),
    linear-gradient(#404040, #404040),
    linear-gradient(#404040, #404040),
    linear-gradient(#404040, #404040);
  background-image:
    linear-gradient(-135deg, #555 50%, transparent 50%),
    linear-gradient(135deg, #555 50%, transparent 50%),
    linear-gradient(#f0f0f0, #f0f0f0),
    linear-gradient(#404040, #404040),
    linear-gradient(#404040, #404040),
    linear-gradient(#404040, #404040),
    linear-gradient(#404040, #404040);
  background-size: 4px 4px, 4px 4px, 32px 100%, 2px 100%, 1px 100%, 100% 1px, 100% 1px;
  background-position: right 16px center, right 12px center, right, right 32px top, left, top, bottom;
  background-repeat: no-repeat;
}
.wide { width: 401px; height: 36px; }
.size { width: 100px; }
.font { width: 121px; }
.glyph { font-family: "Liberation Serif", serif; font-weight: 700; fill: #707070; }
.blue { fill: #6b6bb4; }
.yellow { fill: #b8b45c; }
.rose { fill: #b87484; }
.sky { fill: #639bc6; }
.digits { font-family: "Liberation Sans", sans-serif; font-weight: 700; fill: #666; }

/* Workspace */
.workspace {
  flex: 1;
  display: grid;
  grid-template-columns: 1667fr 883fr;
  gap: 8px;
  padding: 0 1px 7px 1px;
}
.video { background: #000; border: 1px solid #505050; }
.side { display: flex; flex-direction: column; }
.list { flex: 1; border: 1px solid #505050; }
.copybar {
  height: 42px;
  margin-top: 8px;
  padding-top: 1px;
  display: flex;
  border: 1px solid #505050;
  border-bottom: 0;
  border-left: 0;
  font-family: "Liberation Sans", sans-serif;
  font-size: 21px;
  color: #646464;
}
.copy {
  width: 80px;
  height: 38px;
  margin-right: 10px;
  padding-right: 14px;
  text-align: right;
  border: solid #222;
  border-width: 0 1px 1px 0;
  box-shadow: inset 0 1px #aaa;
  background: #858585;
}
.copybar label { width: 214px; display: flex; align-items: center; gap: 8px; }
.copybar input {
  appearance: none;
  width: 24px;
  height: 24px;
  margin: 0;
  border: solid #333;
  border-width: 1px 0 0 1px;
  background: #e2e2e2;
}
.memo {
  height: 292px;
  width: 100%;
  margin: 0;
  border: 0;
  border-right: 1px solid #505050;
  resize: none;
  background: #f0f0f0;
}

/* Transport */
.transport {
  height: 64px;
  margin-left: 3px;
  padding: 9px 0 0 36px;
  display: flex;
  align-items: flex-start;
  background: linear-gradient(#555 0 1px, #f0f0f0 1px, #c8c8c8 4px, #8a8a8a 7px, #777 8px, #7c7c7c 51px, #505050 53px, #303030 58px, #181818);
  font-family: "Liberation Sans", sans-serif;
  font-size: 22px;
  color: #fff;
}
.keys {
  display: flex;
  gap: 2px;
  padding: 2px;
  margin-right: 12px;
  border-radius: 4px;
  background: #333;
}
.keys button {
  width: 45px;
  height: 40px;
  display: grid;
  place-items: center;
  border: 1px solid #c8c8c8;
  background: linear-gradient(#9a9a9a, #7e7e7e 50%, #707070 50%, #808080);
}
.keys button:first-child { border-radius: 4px 0 0 4px; }
.keys button:last-child { border-radius: 0 4px 4px 0; }
.code {
  width: 207px;
  height: 39px;
  margin: 3px 12px 0 0;
  padding-left: 20px;
  border: 1px solid #999;
  outline: 1px solid #555;
  background: #0b140b;
  font-family: "Liberation Mono", monospace;
  font-size: 25px;
  line-height: 27px;
  color: #8c8c8c;
}
.field { display: flex; }
.field span { margin: 13px 6px 0 0; line-height: 25px; }
.in { margin-left: 15px; }
.out { margin-left: 5px; }
.duration { margin-left: 12px; }
.speed { margin-left: 59px; }
.speed .code { width: 71px; background: #000; }

/* Timeline */
.timeline {
  height: 235px;
  margin: 0 2px 0 3px;
  display: flex;
  justify-content: space-between;
  border-left: 1px solid #505050;
  border-bottom: 1px solid #505050;
  overflow: hidden;
}
.timeline-tools button {
  display: block;
  width: 40px;
  height: 38px;
  margin-bottom: 2px;
  padding: 4px 0 0 0;
  border: solid #8c8c8c;
  border-width: 1px 1px 1px 0;
}
.watermark { width: 558px; padding-top: 107px; color: #9c9c9c; }
.watermark p { margin: 0; }
.wm-title { font-size: 38px; line-height: 50px; }
.wm-text { font-size: 28px; line-height: 42px; }

/* Status bar */
.status {
  height: 34px;
  padding: 5px 0 0 764px;
  display: grid;
  grid-template-columns: 1134fr 241fr 241fr 49fr 61fr 59fr;
  gap: 2px;
}
.status span { border: 1px solid #a8a8a8; border-right-color: #fff; border-bottom: 2px solid #fff; }

/* Taskbar */
.taskbar {
  height: 80px;
  display: flex;
  background: linear-gradient(90deg, #cfe6ee 0, #d0e4ed 45%, #d3deeb 75%, #d5dbea);
}
.start { width: 97px; display: grid; place-items: center; }
.search {
  width: 687px;
  display: flex;
  align-items: center;
  gap: 24px;
  padding-left: 21px;
  border: 2px solid #ccc;
  background: #fff;
}
.search input {
  flex: 1;
  min-width: 0;
  padding: 4px 0 0;
  border: 0;
  background: none;
  font: 28px "Open Sans", "Noto Sans", sans-serif;
}
.search input::placeholder { color: #333; opacity: 1; }
.tool { width: 96px; display: grid; place-items: center; }
.apps { display: flex; margin-left: 5px; gap: 2px; }
.apps button {
  position: relative;
  width: 96px;
  display: grid;
  place-items: center;
}
.open::after {
  content: "";
  position: absolute;
  left: 8px;
  right: 8px;
  bottom: 0;
  height: 4px;
  background: #0078d7;
}
.active { background: #eff3f8; }
.active::after { left: 0; right: 0; }
.tray {
  margin-left: auto;
  display: flex;
  align-items: center;
  border-right: 8px solid #d9e0ec;
  box-shadow: inset -2px 0 #a9b3c6;
  font-size: 23px;
}
.weather { display: flex; align-items: center; gap: 20px; font-size: 24px; }
.tray-icons { display: flex; align-items: center; gap: 17px; margin-left: 36px; }
.lang { margin-left: 20px; }
.clock { width: 136px; margin-left: 12px; padding-top: 1px; display: grid; line-height: 37px; text-align: center; }
.notify { margin-left: 24px; padding-right: 41px; }

/* Message box */
.dialog {
  position: absolute;
  left: 853px;
  top: 591px;
  width: 855px;
  background: #fff;
  outline: 2px solid #282828;
  box-shadow: 4px 6px 20px rgba(0, 0, 0, .55);
  font-size: 22px;
}
.dialog-head { display: flex; justify-content: space-between; padding: 13px 23px 0 13px; }
.dialog h1 { margin: 0; font-size: 23px; line-height: 30px; font-weight: 400; }
.close { height: 28px; }
.dialog-body { display: flex; gap: 17px; padding: 67px 70px 54px 46px; }
.dialog-body p { margin: 0; padding-top: 1px; width: 670px; line-height: 31px; }
.dialog-foot {
  height: 99px;
  display: flex;
  justify-content: flex-end;
  gap: 18px;
  padding: 19px 43px 0 0;
  background: #f0f0f0;
}
.dialog-foot button { width: 161px; height: 52px; padding-top: 1px; border: 1px solid #adadad; background: #e1e1e1; }
.dialog-foot .ok { border: 2px solid #0078d7; outline: 1px dotted #000; outline-offset: -3px; }
```
